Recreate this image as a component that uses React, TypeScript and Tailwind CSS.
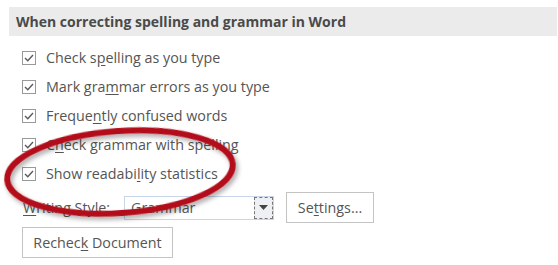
import React from 'react';

const font = { fontFamily: '"Open Sans", "Noto Sans", sans-serif' };

const U = ({ children }: { children: React.ReactNode }) => <span className="underline underline-offset-2">{children}</span>;

const Check = () => (
  <span className="flex h-[14px] w-[14px] shrink-0 items-center justify-center border border-[#999] bg-white">
    <svg width="12" height="12" viewBox="0 0 12 12">
      <path d="M2 6 L4.8 8.8 L10 3" fill="none" stroke="#5a5a5a" strokeWidth="1.4" />
    </svg>
  </span>
);

const options: React.ReactNode[] = [
  <>Check s<U>p</U>elling as you type</>,
  <>Mark gra<U>m</U>mar errors as you type</>,
  <>Freque<U>n</U>tly confused words</>,
  <>C<U>h</U>eck grammar with spelling</>,
  <>Show readabi<U>l</U>ity statistics</>,
];

export default function App() {
  return (
    <div className="relative h-[265px] w-[558px] overflow-hidden bg-white text-[#444]" style={font}>
      <div className="ml-[9px] mr-[1px] mt-[7px] flex h-[29px] items-center bg-[#ebebeb] pl-[7px] text-[14px] font-bold text-[#4a4a4a]">
        When correcting spelling and grammar in Word
      </div>

      <div className="mt-[7px] flex flex-col pl-[22px]">
        {options.map((label, i) => (
          <div key={i} className="flex h-[29px] items-center gap-[10px] text-[14.3px] text-[#555]">
            <Check />
            <span>{label}</span>
          </div>
        ))}
      </div>

      <div className="mt-[4px] flex items-center pl-[23px] text-[14.3px] text-[#555]">
        <span className="w-[101px]"><U>W</U>riting Style:</span>
        <div className="flex h-[24px] w-[150px] items-stretch border border-[#c7d6e8] bg-white">
          <span className="flex flex-1 items-center pl-[6px]">Grammar</span>
          <span className="flex w-[19px] items-center justify-center border border-dashed border-[#777] bg-[#eef0f4]">
            <svg width="9" height="5" viewBox="0 0 9 5"><path d="M0 0 H9 L4.5 5 Z" fill="#444" /></svg>
          </span>
        </div>
        <button className="ml-[12px] h-[31px] w-[88px] border border-[#c4c4c4] bg-white text-[14.3px] text-[#555]">
          Se<U>t</U>tings...
        </button>
      </div>

      <div className="mt-[4px] pl-[22px]">
        <button className="h-[31px] w-[151px] border border-[#c4c4c4] bg-white text-[14.3px] text-[#555]">
          Rechec<U>k</U> Document
        </button>
      </div>

      <svg className="pointer-events-none absolute left-0 top-0" width="558" height="265">
        <defs>
          <filter id="sh" x="-20%" y="-40%" width="140%" height="180%">
            <feGaussianBlur in="SourceAlpha" stdDeviation="2.5" />
            <feOffset dx="2" dy="3" result="b" />
            <feComponentTransfer><feFuncA type="linear" slope="0.35" /></feComponentTransfer>
            <feMerge><feMergeNode /><feMergeNode in="SourceGraphic" /></feMerge>
          </filter>
        </defs>
        <ellipse cx="120" cy="172" rx="113" ry="41" transform="rotate(-4 120 172)" fill="none" stroke="#b3111a" strokeWidth="6" filter="url(#sh)" />
      </svg>
    </div>
  );
}
